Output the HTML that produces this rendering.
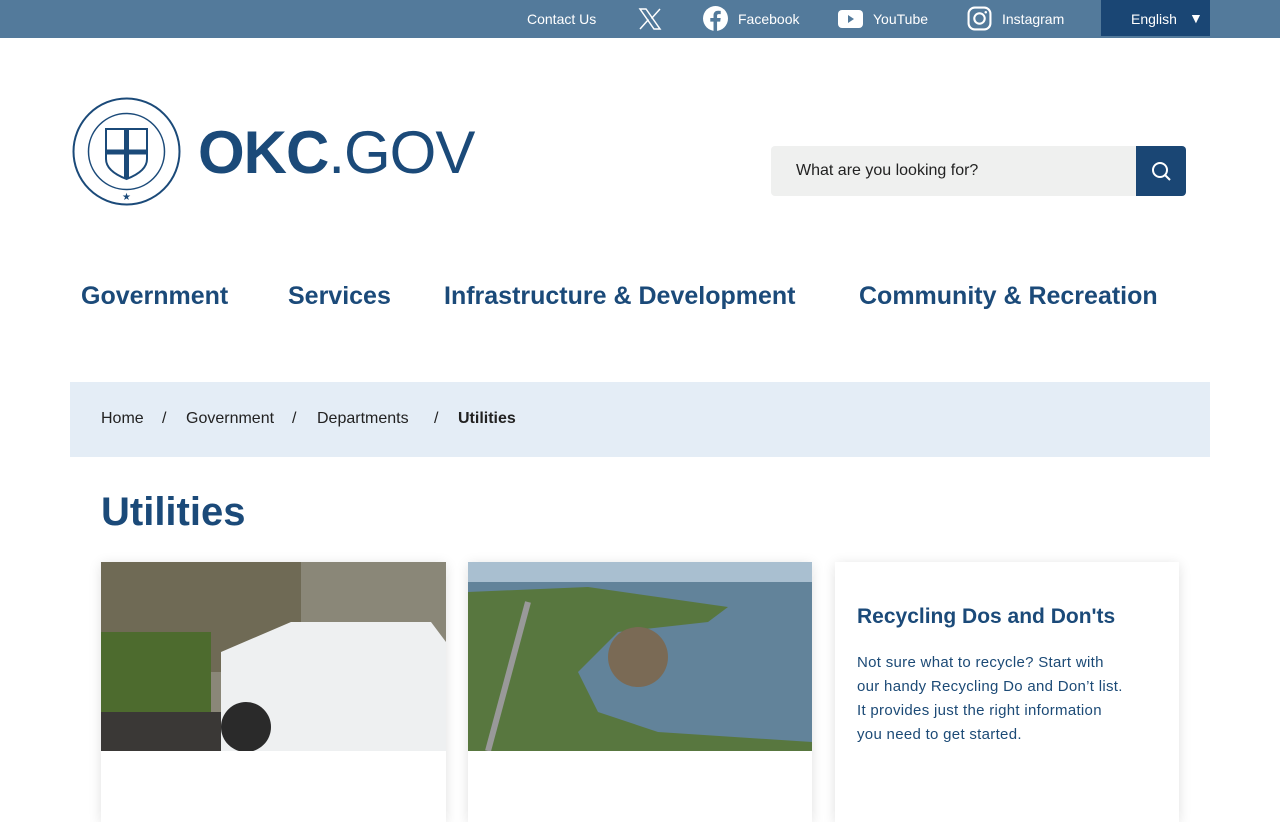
<!DOCTYPE html>
<html><head><meta charset="utf-8"><style>
*{box-sizing:border-box;margin:0;padding:0}
body{width:1280px;height:800px;overflow:hidden;background:#fff;font-family:"Liberation Sans",sans-serif;color:#1c4a76;position:relative}
.top{position:absolute;left:0;top:0;width:1280px;height:38px;background:#537a9b;color:#fff;font-size:14px}
.top span{position:absolute;top:11px}
.lang{position:absolute;left:1101px;top:0;width:109px;height:36px;background:#1a4674}
.logo{position:absolute;left:198px;top:118px;font-size:60px;color:#1b4a79;letter-spacing:-1px}
.nav{position:absolute;top:282px;font-size:25px;font-weight:bold;color:#1b4a79}
.search{position:absolute;left:771px;top:146px;width:366px;height:50px;background:#eff0ef;border-radius:4px 0 0 4px;font-size:16px;color:#222;padding:16px 25px}
.sbtn{position:absolute;left:1136px;top:146px;width:50px;height:50px;background:#1a4674;border-radius:0 4px 4px 0}
.bc{position:absolute;left:70px;top:382px;width:1140px;height:75px;background:#e4edf6;font-size:16px;color:#222}
.bc span{position:absolute;top:28px}
h1{position:absolute;left:101px;top:490px;font-size:40px;color:#1b4a79}
.card{position:absolute;top:562px;background:#fff;box-shadow:0 2px 12px rgba(0,0,0,.12);height:260px}
</style></head><body>
<div class="top">
<span style="left:527px">Contact Us</span>
<svg style="position:absolute;left:638px;top:7px" width="24" height="24" viewBox="0 0 24 24"><path d="M2 2h6l14 20h-6z M22 2L13.5 11.5 M2 22l8.5-9.5" stroke="#fff" stroke-width="1.5" fill="none"/></svg>
<svg style="position:absolute;left:703px;top:6px" width="25" height="25" viewBox="0 0 24 24"><circle cx="12" cy="12" r="12" fill="#fff"/><path d="M13.5 24V15h3l.5-3.5h-3.5V9.5c0-1 .3-1.7 1.8-1.7H17V4.7c-.3 0-1.4-.2-2.6-.2-2.6 0-4.3 1.6-4.3 4.4v2.6H7V15h3.1v9z" fill="#537a9b"/></svg>
<span style="left:738px">Facebook</span>
<svg style="position:absolute;left:838px;top:10px" width="25" height="18" viewBox="0 0 25 18"><rect width="25" height="18" rx="4" fill="#fff"/><path d="M10 5l6 4-6 4z" fill="#537a9b"/></svg>
<span style="left:873px">YouTube</span>
<svg style="position:absolute;left:967px;top:6px" width="25" height="25" viewBox="0 0 24 24"><rect x="1.5" y="1.5" width="21" height="21" rx="6" stroke="#fff" stroke-width="2" fill="none"/><circle cx="12" cy="12" r="5" stroke="#fff" stroke-width="2" fill="none"/><circle cx="18" cy="6" r="1.2" fill="#fff"/></svg>
<span style="left:1002px">Instagram</span>
<div class="lang"><span style="left:30px;top:11px">English</span><span style="left:88px;top:10px">▼</span></div>
</div>
<svg style="position:absolute;left:72px;top:97px" width="109" height="109" viewBox="0 0 109 109"><circle cx="54.5" cy="54.5" r="53" fill="none" stroke="#1b4a79" stroke-width="2"/><circle cx="54.5" cy="54.5" r="38" fill="none" stroke="#1b4a79" stroke-width="1.5"/><path d="M34 32h41v30c0 10-10 16-20.5 20C44 78 34 72 34 62z" fill="none" stroke="#1b4a79" stroke-width="2"/><path d="M54.5 32v50M34 55h41" stroke="#1b4a79" stroke-width="5"/><text x="54.5" y="103" font-size="10" fill="#1b4a79" text-anchor="middle">★</text></svg>
<div class="logo"><b style="font-weight:900">OKC</b>.GOV</div>
<div class="search">What are you looking for?</div>
<div class="sbtn"><svg width="50" height="50" viewBox="0 0 50 50"><circle cx="24" cy="24" r="7" stroke="#fff" stroke-width="2" fill="none"/><path d="M29 29l5 5" stroke="#fff" stroke-width="2"/></svg></div>
<div class="nav" style="left:81px">Government</div>
<div class="nav" style="left:288px">Services</div>
<div class="nav" style="left:444px">Infrastructure &amp; Development</div>
<div class="nav" style="left:859px">Community &amp; Recreation</div>
<div class="bc"><span style="left:31px">Home</span><span style="left:92px">/</span><span style="left:116px">Government</span><span style="left:222px">/</span><span style="left:247px">Departments</span><span style="left:364px">/</span><span style="left:388px;font-weight:bold">Utilities</span></div>
<h1>Utilities</h1>
<div class="card" style="left:101px;width:345px"><svg width="345" height="189"><rect width="345" height="189" fill="#8a8778"/><rect width="200" height="110" fill="#6f6a55"/><rect y="70" width="110" height="80" fill="#4d6b2e"/><path d="M120 189V90l70-30h140l15 20v109z" fill="#eef0f1"/><circle cx="145" cy="165" r="25" fill="#2a2a2a"/><rect y="150" width="120" height="39" fill="#3a3836"/></svg></div>
<div class="card" style="left:468px;width:344px"><svg width="344" height="189"><rect width="344" height="189" fill="#62839a"/><rect width="344" height="20" fill="#a9bfd0"/><path d="M0 30L120 25L260 45L240 60L150 70L110 110L130 150L190 170L344 180V189H0z" fill="#58773f"/><path d="M20 189L60 40" stroke="#999" stroke-width="6"/><circle cx="170" cy="95" r="30" fill="#7a6a55"/></svg></div>
<div class="card" style="left:835px;width:344px;padding:43px 22px">
<div style="font-size:21px;font-weight:bold;color:#1b4a79">Recycling Dos and Don'ts</div>
<div style="margin-top:22px;white-space:nowrap;font-size:15px;line-height:24px;color:#1c4a76;letter-spacing:.3px">Not sure what to recycle? Start with<br>our handy Recycling Do and Don’t list.<br>It provides just the right information<br>you need to get started.</div></div>
</body></html>
